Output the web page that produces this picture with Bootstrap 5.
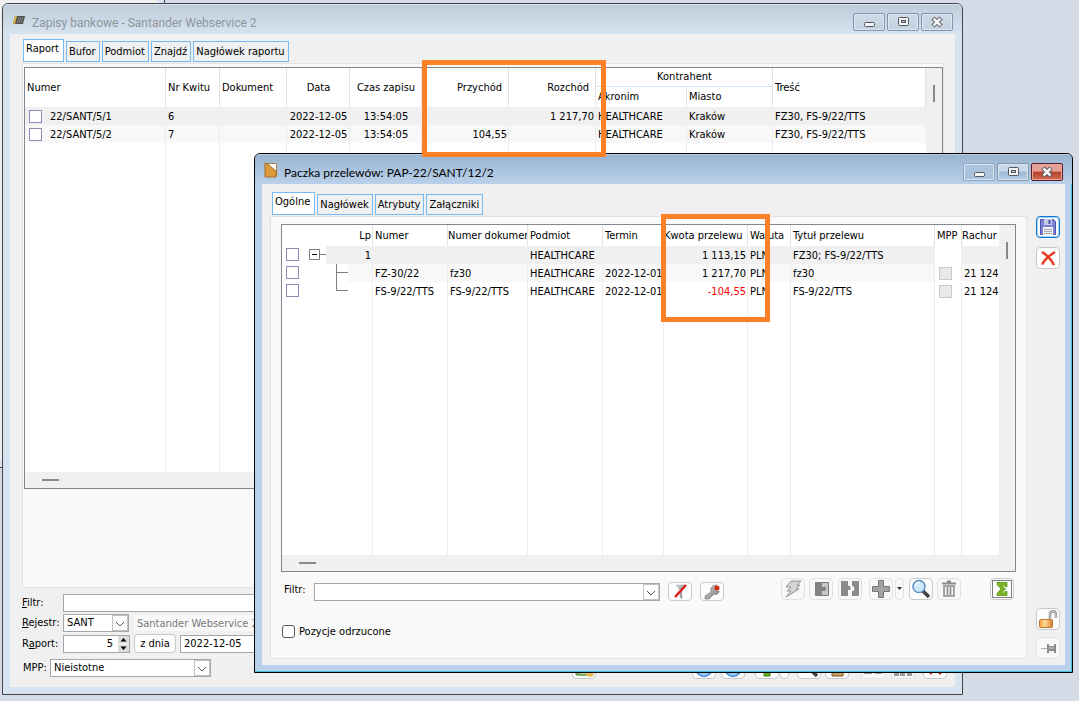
<!DOCTYPE html>
<html lang="pl">
<head>
<meta charset="utf-8">
<meta name="viewport" content="width=device-width, initial-scale=1">
<title>Zapisy bankowe</title>
<link href="https://cdn.jsdelivr.net/npm/bootstrap@5.3.0/dist/css/bootstrap.min.css" rel="stylesheet">
<script src="https://cdn.jsdelivr.net/npm/bootstrap@5.3.0/dist/js/bootstrap.bundle.min.js"></script>
<style>
body{font:11px/14px "DejaVu Sans Condensed","Noto Sans",sans-serif;color:#000;background:#d6dce7}
button,input,select{font:inherit;color:inherit}
.desktop{min-height:100vh;overflow:hidden}
.win{position:absolute;border:1px solid #444;border-radius:6px 6px 0 0;overflow:hidden;background:#d6e4f2;padding:0 7px 7px}
.win-back{left:2px;top:3px;right:116px;bottom:6px}
.win-front{left:254px;top:153px;right:6px;bottom:28px;border-color:#000;background:#b9d1ea;box-shadow:inset -1px -1px 0 #3cc3dc}
.win-older{left:-300px;top:-20px;width:465px;bottom:233px;background:#d6e4f2;border-radius:0}
.titlebar{height:30px;margin:0 -7px;padding:1px 9px 0 9px;background:linear-gradient(#f4f8fb 0,#bfcddb 1px,#d6e4f2 100%);font-family:Roboto,"Noto Sans",sans-serif;font-size:12px;color:#8f959b}
.win-front .titlebar{background:linear-gradient(#dfe9f3 0,#99b4d1 1px,#b9d1ea 100%);color:#000;font-family:Lato,"Noto Sans",sans-serif}
.titletext{margin-left:2px;padding-top:6px}
.client{background:#f0f0f0}
.capbtn{width:32px;height:18px;border:1px solid #8492aa;border-radius:2px;background:linear-gradient(#cfdae7,#c3d1e0);box-shadow:inset 0 0 0 1px #dde7f1;padding:0}
.win-front .capbtn{background:linear-gradient(#c6d8ea 45%,#9fb8d2 50%,#b5cde6)}
.win-front .capbtn.dim{background:#abc4de;border-color:#8ba5c4}
.win-front .capbtn.close-red{border-color:#5c1a22;background:linear-gradient(#e4a197 45%,#b9402b 50%,#cf6b51);box-shadow:inset 0 0 0 1px #e6a99f}
.tabbtn{border:1px solid #74bbf5;background:#f0f0f0;height:21px;padding:0 3px 0 2px}
.tabbtn.active{background:#fff;height:23px;padding:0 4px 4px 2px}
.panel{border:1px solid #e3e3e3;background:#f9f9f9}
.gridbox{border:1px solid #83858f;background:#fff}
.gridbox table{table-layout:fixed;width:100%;height:100%;border-collapse:separate;border-spacing:0}
.gridbox th,.gridbox td{font-weight:400;white-space:nowrap;overflow:hidden;border-right:1px solid #ececec;padding:1px 1px 0 2px;vertical-align:middle}
.gridbox th{border-right-color:#e2e2e2;padding-top:0}
.gridbox .r1 td{background:#f0f0f0;border-right-color:#f0f0f0}
.gridbox .r2 td{background:#f8f8f8}
.gridbox tbody tr{height:18px}
.gridbox tbody tr.filler{height:auto}
.gridbox .nobg td:first-child,.gridbox .nobg td.plain{background:#fff}
.gridbox td:first-child.open,.gridbox th.open{border-right:0}
.head-half{height:19px}
.head-low{height:20px}
.head-one{height:21px}
.gridbox .under{border-bottom:1px solid #d3e5f5}
.gridbox th.hr6{padding-right:6px}
.gridbox td:last-child{border-right:0;padding-right:0}
.neg{color:#f00}
.sb{background:#f0f0f0;flex:none}
.sbv{width:16px;padding:17px 0 0 7px}
.sbh{height:16px;padding:7px 0 0 17px}
.sbv i{display:block;width:2px;height:17px;background:#8a8a8a}
.sbh i{display:block;width:17px;height:2px;background:#8a8a8a}
.cb{appearance:none;flex:none;width:13px;height:13px;border:1px solid #8d89b8;background:#fff;margin:0 0 1px;display:block}
.cb:disabled{border-color:#c9c9c9;background:#e9e9e9}
.cb.round{border-color:#555;border-radius:3px}
.rowpick{margin-left:2px}
.field{height:18px;border:1px solid #a5a5ad;background:#fff;border-radius:0;padding:0 3px;min-width:0}
.field:disabled{border-color:#f0f0f0;background:#f8f8f8;color:#7a7a7a}
.boxed{position:relative;height:18px}
.boxed select{appearance:none;width:100%}
.boxed svg{position:absolute;right:1px;top:1px;pointer-events:none}
.lbl{width:41px}
.w-reg{width:66px}.w-spin{width:67px}.w-mpp{width:161px}
input[type=number]{appearance:textfield;width:100%;text-align:right;padding-right:16px}
input[type=number]::-webkit-inner-spin-button{display:none}
.textbtn{width:42px;height:19px;border:1px solid #c8c8c8;border-radius:4px;background:#fdfdfd;padding:0}
.tb{width:24px;height:22px;border:1px solid #c9c9c9;border-radius:4px;background:#fdfdfd;padding:0;flex:none;display:flex;align-items:center;justify-content:center}
.tb.off{border-color:#e2e2e2;background:#f8f8f8}
.tb.slim{width:9px}
.tb.short{height:19px}
.tb.blue{border-color:#0a78d0;box-shadow:inset 0 0 0 1px #a9d2f3}
.below{height:98px}
.form-low{padding:6px 8px 8px 12px}
.mark-frame{position:absolute;border:5px solid #ff8127;pointer-events:none}
.mark-a{left:422px;top:60px;width:184px;height:97px}
.mark-b{left:661px;top:214px;width:109px;height:108px}
.g4{gap:4px}.g2{gap:2px}
</style>
</head>
<body>
<svg width="0" height="0" class="position-absolute" aria-hidden="true">
<defs>
<linearGradient id="gm" x1="0" y1="0" x2="1" y2="1"><stop offset="0" stop-color="#d2d2d2"/><stop offset="1" stop-color="#7c7c7c"/></linearGradient>
<linearGradient id="go" x1="0" y1="0" x2="1" y2="0"><stop offset="0" stop-color="#f39a3a"/><stop offset=".4" stop-color="#ffdc9c"/><stop offset="1" stop-color="#e07b28"/></linearGradient>
<radialGradient id="gb" cx=".5" cy=".75" r=".7"><stop offset="0" stop-color="#a9ddff"/><stop offset="1" stop-color="#2f7fd6"/></radialGradient>
<symbol id="c-min" viewBox="0 0 16 14"><rect x="3.500" y="7.500" width="10" height="4" rx="1" fill="#f4f4f4" stroke="#53565e"/></symbol>
<symbol id="c-max" viewBox="0 0 16 14"><rect x="3.500" y="2.500" width="10" height="8" rx="1" fill="#f4f4f4" stroke="#53565e"/><rect x="6.500" y="5.500" width="4" height="2" fill="#b7cbe0" stroke="#53565e"/></symbol>
<symbol id="c-x" viewBox="0 0 16 14"><path d="M4 3l8 8M12 3l-8 8" stroke="#53565e" stroke-width="4.500"/><path d="M4.500 3.500l7 7M11.500 3.500l-7 7" stroke="#f7f7f7" stroke-width="2.500"/></symbol>
<symbol id="chev" viewBox="0 0 16 16"><rect x=".5" y=".5" width="15" height="15" fill="#fff" stroke="#c3c3c3"/><path d="M4 7l4 4 4-4" fill="none" stroke="#555"/></symbol>
<symbol id="mag" viewBox="0 0 20 20"><path d="M12 12l6 6" stroke="#444" stroke-width="3.500"/><circle cx="8" cy="7.500" r="6" fill="#cde8fb" stroke="#5c8fc4" stroke-width="1.500"/><path d="M4.500 7a4 4 0 0 1 4-3.500" fill="none" stroke="#fff" stroke-width="1.500"/></symbol>
<symbol id="ball" viewBox="0 0 20 20"><circle cx="10" cy="10" r="8.500" fill="url(#gb)" stroke="#2a74c8"/></symbol>
</defs>
</svg>
<div class="desktop position-relative vh-100">
  <div class="win win-older"><div class="client h-100"></div></div>

  <section class="win win-back d-flex flex-column" aria-label="Zapisy bankowe">
    <header class="titlebar d-flex align-items-center">
      <svg width="14" height="12" viewBox="0 0 14 12" class="me-1"><path d="M3 2h10l-2 8H1z" fill="#4d4d4d"/><path d="M3 2h2L3 10H1z" fill="#e0b646"/><path d="M6.500 3l-1 6M8.500 3l-1 6M10.500 3l-1 6" stroke="#8a8a8a"/></svg>
      <span class="titletext me-auto">Zapisy bankowe - Santander Webservice 2</span>
      <div class="d-flex g2 pt-1">
        <button class="capbtn" aria-label="Minimalizuj"><svg width="16" height="14" class="d-block mx-auto"><use href="#c-min"/></svg></button>
        <button class="capbtn" aria-label="Maksymalizuj"><svg width="16" height="14" class="d-block mx-auto"><use href="#c-max"/></svg></button>
        <button class="capbtn" aria-label="Zamknij"><svg width="16" height="14" class="d-block mx-auto"><use href="#c-x"/></svg></button>
      </div>
    </header>
    <div class="client flex-fill d-flex flex-column">
      <nav class="d-flex align-items-end g2" style="padding:5px 0 1px 13px">
        <button class="tabbtn active">Raport</button><button class="tabbtn">Bufor</button><button class="tabbtn">Podmiot</button><button class="tabbtn">Znajdź</button><button class="tabbtn">Nagłówek raportu</button>
      </nav>
      <div class="panel flex-fill d-flex flex-column" style="margin:0 11px 0 12px;padding:3px 0 0 1px">
        <div class="gridbox flex-fill d-flex">
          <div class="flex-fill d-flex flex-column">
            <div class="flex-fill">
              <table>
                <colgroup><col style="width:141px"><col style="width:54px"><col style="width:67px"><col style="width:63px"><col style="width:72px"><col style="width:87px"><col style="width:87px"><col style="width:91px"><col style="width:86px"><col></colgroup>
                <thead>
                  <tr class="head-half"><th rowspan="2">Numer</th><th rowspan="2">Nr Kwitu</th><th rowspan="2">Dokument</th><th rowspan="2" class="text-center">Data</th><th rowspan="2" class="text-center">Czas zapisu</th><th rowspan="2" class="text-end hr6">Przychód</th><th rowspan="2" class="text-end hr6">Rozchód</th><th colspan="2" class="text-center under">Kontrahent</th><th rowspan="2">Treść</th></tr>
                  <tr class="head-low"><th>Akronim</th><th>Miasto</th></tr>
                </thead>
                <tbody>
                  <tr class="r1"><td><label class="d-flex align-items-center gap-2"><input type="checkbox" class="cb rowpick">22/SANT/5/1</label></td><td>6</td><td></td><td class="text-center">2022-12-05</td><td class="text-center">13:54:05</td><td></td><td class="text-end">1 217,70</td><td>HEALTHCARE</td><td>Kraków</td><td>FZ30, FS-9/22/TTS</td></tr>
                  <tr class="r2"><td><label class="d-flex align-items-center gap-2"><input type="checkbox" class="cb rowpick">22/SANT/5/2</label></td><td>7</td><td></td><td class="text-center">2022-12-05</td><td class="text-center">13:54:05</td><td class="text-end">104,55</td><td></td><td>HEALTHCARE</td><td>Kraków</td><td>FZ30, FS-9/22/TTS</td></tr>
                  <tr class="filler"><td></td><td></td><td></td><td></td><td></td><td></td><td></td><td></td><td></td><td></td></tr>
                </tbody>
              </table>
            </div>
            <div class="sb sbh"><i></i></div>
          </div>
          <div class="sb sbv"><i></i></div>
        </div>
        <div class="below"></div>
      </div>
      <div class="form-low d-flex flex-column g2">
        <div class="d-flex align-items-center"><label class="lbl" for="f1"><u>F</u>iltr:</label><input id="f1" class="field flex-fill"></div>
        <div class="d-flex align-items-center"><label class="lbl" for="f2"><u>R</u>ejestr:</label>
          <div class="boxed w-reg"><select id="f2" class="field"><option>SANT</option></select><svg width="16" height="16"><use href="#chev"/></svg></div>
          <input class="field flex-fill ms-1" disabled value="Santander Webservice 2" aria-label="Nazwa rejestru"></div>
        <div class="d-flex align-items-center"><label class="lbl" for="f3">R<u>a</u>port:</label>
          <div class="boxed w-spin"><input id="f3" type="number" class="field" value="5"><svg width="11" height="16" viewBox="0 0 11 16"><path d="M0 0h11v7.500H0zM0 8.500h11V16H0z" fill="#dcdcdc"/><path d="M2.500 5.500h6l-3-3.500zM2.500 10.500h6l-3 3.500z" fill="#000"/></svg></div>
          <button class="textbtn ms-1 me-1">z dnia</button><input class="field" style="width:120px" value="2022-12-05" aria-label="Data"></div>
        <div class="d-flex align-items-center" style="padding-top:2px">
          <label for="f4" style="width:28px;white-space:nowrap;padding-left:1px">MPP:</label>
          <div class="boxed w-mpp"><select id="f4" class="field"><option>Nieistotne</option></select><svg width="16" height="16"><use href="#chev"/></svg></div>
          <div class="d-flex ms-auto">
            <button class="tb" style="margin-right:96px" aria-label="Rozlicz"><svg width="20" height="20"><path d="M2 6h13v11H2z" fill="#9cc07a" stroke="#5f8a45"/><path d="M5 8h12v9H5z" fill="#b3d38f" stroke="#5f8a45"/><circle cx="16" cy="15" r="4" fill="#e9bd5b"/></svg></button>
            <button class="tb" style="margin-right:5px" aria-label="Wyślij"><svg width="20" height="20"><use href="#ball"/></svg></button>
            <button class="tb" style="margin-right:10px" aria-label="Pobierz"><svg width="20" height="20"><use href="#ball"/></svg></button>
            <button class="tb" style="margin-right:1px" aria-label="Dodaj"><svg width="20" height="20"><path d="M7 2h6v5h5v6h-5v5H7v-5H2V7h5z" fill="#63ad25" stroke="#3b7a12"/></svg></button>
            <button class="tb slim" style="margin-right:8px" aria-label="Więcej"></button>
            <button class="tb" style="margin-right:4px" aria-label="Podgląd"><svg width="20" height="20"><use href="#mag"/></svg></button>
            <button class="tb" style="margin-right:12px" aria-label="Usuń"><svg width="20" height="20"><path d="M5 6h11v12H5z" fill="#c79f5f" stroke="#7c5a26"/></svg></button>
            <button class="tb off" style="margin-right:6px" aria-label="Połącz"><svg width="20" height="20"><path d="M1 4h8v12H1zM12 4h7v12h-7z" fill="#9a9a9a"/></svg></button>
            <button class="tb off" style="margin-right:8px" aria-label="Zestawienie"><svg width="20" height="20"><path d="M1 12h5v6H1zM7 8h5v10H7zM14 10h5v8h-5z" fill="#9a9a9a"/></svg></button>
            <button class="tb" aria-label="Zamknij okno"><svg width="20" height="20"><path d="M4 4l12 12M16 4L5 16" stroke="#d3271b" stroke-width="2.500"/></svg></button>
          </div>
        </div>
      </div>
    </div>
  </section>

  <section class="win win-front d-flex flex-column" aria-label="Paczka przelewów">
    <header class="titlebar d-flex align-items-center">
      <svg width="14" height="16" viewBox="0 0 14 16" class="me-1"><path d="M1.500 1.500h11v13h-11z" fill="#fff" stroke="#a98145"/><path d="M1 1l4 2 7 6v6H1z" fill="#dc9a3d" stroke="#a8712a"/></svg>
      <span class="titletext me-auto">Paczka przelewów: PAP-22/SANT/12/2</span>
      <div class="d-flex g2 pt-1">
        <button class="capbtn dim" aria-label="Minimalizuj"><svg width="16" height="14" class="d-block mx-auto"><use href="#c-min"/></svg></button>
        <button class="capbtn" aria-label="Maksymalizuj"><svg width="16" height="14" class="d-block mx-auto"><use href="#c-max"/></svg></button>
        <button class="capbtn close-red" aria-label="Zamknij"><svg width="16" height="14" class="d-block mx-auto"><use href="#c-x"/></svg></button>
      </div>
    </header>
    <div class="client flex-fill d-flex" style="padding:8px 5px 6px 8px;gap:9px">
      <div class="flex-fill d-flex flex-column">
        <nav class="d-flex align-items-end g2" style="padding:0 0 1px 2px">
          <button class="tabbtn active">Ogólne</button><button class="tabbtn">Nagłówek</button><button class="tabbtn">Atrybuty</button><button class="tabbtn">Załączniki</button>
        </nav>
        <div class="panel flex-fill d-flex flex-column" style="padding:7px 10px 0">
          <div class="gridbox flex-fill d-flex">
            <div class="flex-fill d-flex flex-column">
              <div class="flex-fill">
                <table>
                  <colgroup><col style="width:44px"><col style="width:47px"><col style="width:75px"><col style="width:80px"><col style="width:75px"><col style="width:61px"><col style="width:84px"><col style="width:43px"><col style="width:144px"><col style="width:27px"><col></colgroup>
                  <thead><tr class="head-one"><th class="open"></th><th class="text-end">Lp</th><th>Numer</th><th class="p-0">Numer dokumer</th><th>Podmiot</th><th>Termin</th><th class="p-0">Kwota przelewu</th><th>Waluta</th><th>Tytuł przelewu</th><th>MPP</th><th class="open p-0">Rachur</th></tr></thead>
                  <tbody>
                    <tr class="r1 nobg"><td class="open p-0"><div class="d-flex align-items-center"><input type="checkbox" class="cb ms-1" aria-label="Wiersz 1"><svg width="17" height="18" class="ms-auto"><path d="M.5 3.500h10v10H.5z" fill="#fff" stroke="#7d7d7d"/><path d="M3 8.500h5" stroke="#000"/><path d="M11 8.500h6" stroke="#7d7d7d"/></svg></div></td><td class="text-end">1</td><td></td><td></td><td>HEALTHCARE</td><td></td><td class="text-end">1 113,15</td><td>PLN</td><td>FZ30; FS-9/22/TTS</td><td class="plain"></td><td></td></tr>
                    <tr class="r2 nobg"><td class="open p-0"><input type="checkbox" class="cb ms-1" aria-label="Wiersz 2"></td><td class="p-0"><svg width="22" height="18" class="d-block bg-white"><path d="M10.500 0v18M10.500 8.500h12" stroke="#7d7d7d"/></svg></td><td>FZ-30/22</td><td>fz30</td><td>HEALTHCARE</td><td class="pe-0">2022-12-01</td><td class="text-end">1 217,70</td><td>PLN</td><td>fz30</td><td class="plain"><input type="checkbox" class="cb rowpick" disabled aria-label="MPP 2"></td><td>21 124</td></tr>
                    <tr><td class="open p-0"><input type="checkbox" class="cb ms-1" aria-label="Wiersz 3"></td><td class="p-0"><svg width="22" height="18" class="d-block"><path d="M10.500 0v8.500h12" fill="none" stroke="#7d7d7d"/></svg></td><td>FS-9/22/TTS</td><td>FS-9/22/TTS</td><td>HEALTHCARE</td><td class="pe-0">2022-12-01</td><td class="text-end neg">-104,55</td><td>PLN</td><td>FS-9/22/TTS</td><td class="plain"><input type="checkbox" class="cb rowpick" disabled aria-label="MPP 3"></td><td>21 124</td></tr>
                    <tr class="filler"><td class="open"></td><td></td><td></td><td></td><td></td><td></td><td></td><td></td><td></td><td></td><td></td></tr>
                  </tbody>
                </table>
              </div>
              <div class="sb sbh"><i></i></div>
            </div>
            <div class="sb sbv"><i></i></div>
          </div>
          <div class="d-flex align-items-end" style="margin:6px 2px 0 0">
            <label for="f5" class="align-self-center" style="width:33px;padding-left:3px">Filtr:</label>
            <div class="boxed flex-fill"><input id="f5" class="field w-100 d-block"><svg width="16" height="16"><use href="#chev"/></svg></div>
            <button class="tb short ms-2 me-2" aria-label="Filtruj"><svg width="18" height="17"><path d="M5 2h10l-4 5v9l-2-2V7z" fill="url(#gm)" stroke="#aaa" stroke-width=".5"/><path d="M4 14L15 2" stroke="#dc1e1e" stroke-width="2.500"/></svg></button>
            <button class="tb short" aria-label="Konstruktor filtra"><svg width="18" height="17"><path d="M2 16v-3l6-4c-1-4 1-7 6-7l-3 3 1 3 4 0c0 3-3 4-5 3l-5 5z" fill="url(#gm)" stroke="#888" stroke-width=".8"/><circle cx="14" cy="5" r="2.500" fill="#d13213"/></svg></button>
            <div class="d-flex g4" style="margin:0 0 1px 57px">
              <button class="tb off" aria-label="Wykonaj"><svg width="20" height="20"><path d="M8 2h10l-4 4h3l-4 4h3L3 18l5-6H4l4-4H3z" fill="#d5d5d5" stroke="#939393"/></svg></button>
              <button class="tb off" aria-label="Dołącz"><svg width="20" height="20"><path d="M4.500 3.500h13v13h-13z" fill="#c8c8c8" stroke="#777"/><path d="M4 3h7v5h2c3-1 3 4 0 4h-2v5H4z" fill="#838383"/></svg></button>
              <button class="tb off" style="margin:0 3px 0 1px" aria-label="Rozłącz"><svg width="20" height="20"><path d="M1 2h7v5c3-2 4 5 0 4v6H1zM12 2h7v15h-7v-5c3 1 3-6 0-5z" fill="#8b8b8b"/></svg></button>
              <div class="d-flex g2"><button class="tb off" aria-label="Dodaj"><svg width="20" height="20"><path d="M7.500 1.500h5v6h6v5h-6v6h-5v-6h-6v-5h6z" fill="#a2a2a2" stroke="#777"/></svg></button><button class="tb off slim" aria-label="Więcej"><svg width="5" height="4"><path d="M0 0h5L2.500 3z" fill="#333"/></svg></button></div>
              <button class="tb" style="margin-left:1px" aria-label="Podgląd"><svg width="20" height="20"><use href="#mag"/></svg></button>
              <button class="tb off" aria-label="Usuń"><svg width="20" height="20"><path d="M3 4.500h14M8 2.500h4" stroke="#8a8a8a" stroke-width="2"/><path d="M5 7h10v10H5z" fill="#eee" stroke="#8a8a8a" stroke-width="1.500"/><path d="M8.500 8v8M11.500 8v8" stroke="#8a8a8a" stroke-width="1.500"/></svg></button>
              <button class="tb" style="margin-left:25px" aria-label="Suma"><svg width="20" height="18"><path d="M.5 .5h19v17H.5z" fill="none" stroke="#000" stroke-dasharray="1 1"/><path d="M5 2.500h10v4h-2l-1-1.500H9.500l4 4-4 4H12l1-1.500h2v4H5v-2l4-4.500-4-4.500z" fill="#7db51f" stroke="#4b8a10" stroke-width=".7"/></svg></button>
            </div>
          </div>
          <div class="d-flex align-items-center g4" style="margin:24px 0 19px;padding-left:1px"><input type="checkbox" class="cb round" id="f6"><label for="f6">Pozycje odrzucone</label></div>
        </div>
      </div>
      <div class="d-flex flex-column" style="padding-top:24px">
        <button class="tb blue" aria-label="Zapisz"><svg width="20" height="20"><path d="M2.500 2.500h13l2 2v13h-15z" fill="#7f83d8" stroke="#5053a8"/><path d="M6 2h8v6H6z" fill="#c6cbee"/><path d="M10.500 3h2v4h-2z" fill="#4b4f9f"/><path d="M5 10h10v8H5z" fill="#f5f5f8"/><path d="M6 12.500h8M6 14.500h8M6 16.500h8" stroke="#a9a9b5"/></svg></button>
        <button class="tb" style="margin-top:9px" aria-label="Anuluj"><svg width="20" height="20"><path d="M4 4c5 3 9 7 12 13" fill="none" stroke="#e8391f" stroke-width="2.500"/><path d="M17 4C12 7 7 11 4 16.500" fill="none" stroke="#e8391f" stroke-width="2.500"/></svg></button>
        <button class="tb mt-auto" aria-label="Odblokuj"><svg width="20" height="20"><path d="M12 10V6c0-5 6-5 6 0v3" fill="none" stroke="#8c8c8c" stroke-width="2.500"/><path d="M12 10V6c0-5 6-5 6 0v3" fill="none" stroke="#e8e8e8" stroke-width=".8"/><rect x="1.500" y="10.500" width="13" height="8" rx="1" fill="url(#go)" stroke="#b2793a"/></svg></button>
        <button class="tb off" style="margin-top:7px" aria-label="Przypnij"><svg width="20" height="20"><path d="M3 10.500h7" stroke="#aaa"/><path d="M9 6h2v2h5V6h2v9h-2v-2h-5v2H9z" fill="#8b8b8b"/><path d="M11 10h5" stroke="#d5d5d5"/></svg></button>
      </div>
    </div>
  </section>

  <div class="mark-frame mark-a"></div>
  <div class="mark-frame mark-b"></div>
</div>
</body>
</html>
